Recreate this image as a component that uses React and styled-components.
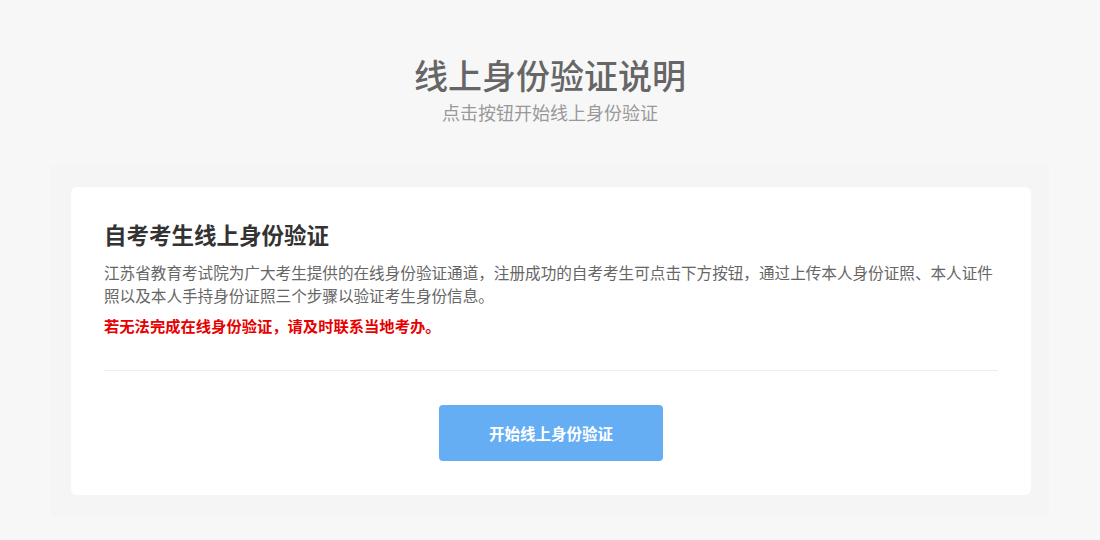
import styled, { createGlobalStyle } from 'styled-components';

const Global = createGlobalStyle`
  html, body {
    margin: 0;
    padding: 0;
    background: #f7f7f7;
    font-family: "Microsoft YaHei", "Noto Sans CJK SC", "Noto Sans", sans-serif;
  }
`;

const Page = styled.div`
  width: 1100px;
  height: 540px;
  overflow: hidden;
`;

const Header = styled.div`
  padding-top: 55px;
  text-align: center;
  h1 {
    margin: 0;
    font-size: 34px;
    line-height: 40px;
    font-weight: 500;
    color: #666;
  }
  p {
    margin: 5px 0 0;
    font-size: 18px;
    line-height: 24px;
    color: #999;
  }
`;

const Wrap = styled.div`
  width: 998px;
  margin: 41px auto 0;
  padding: 22px 18px 21px 20px;
  box-sizing: border-box;
  background: #f5f5f5;
`;

const Card = styled.div`
  background: #fff;
  border-radius: 6px;
  padding: 32px 33px 34px;
  h2 {
    margin: 0;
    font-size: 22.5px;
    line-height: 30px;
    font-weight: 700;
    color: #333;
  }
`;

const Desc = styled.p`
  margin: 12px 0 0;
  font-size: 15.6px;
  line-height: 23px;
  color: #666;
`;

const Warn = styled.p`
  margin: 7px 0 0;
  font-size: 15.3px;
  line-height: 23px;
  font-weight: 700;
  color: #e60000;
`;

const Line = styled.hr`
  margin: 33px 0 0;
  border: 0;
  border-top: 1px solid #eeeeee;
`;

const Actions = styled.div`
  display: flex;
  justify-content: center;
  padding-top: 34px;
`;

const Button = styled.button`
  width: 224px;
  height: 56px;
  border: 0;
  border-radius: 4px;
  background: #66aef4;
  color: #fff;
  font-family: inherit;
  font-size: 15.5px;
  font-weight: 700;
  cursor: pointer;
`;

export default function App() {
  return (
    <Page>
      <Global />
      <Header>
        <h1>线上身份验证说明</h1>
        <p>点击按钮开始线上身份验证</p>
      </Header>
      <Wrap>
        <Card>
          <h2>自考考生线上身份验证</h2>
          <Desc>江苏省教育考试院为广大考生提供的在线身份验证通道，注册成功的自考考生可点击下方按钮，通过上传本人身份证照、本人证件照以及本人手持身份证照三个步骤以验证考生身份信息。</Desc>
          <Warn>若无法完成在线身份验证，请及时联系当地考办。</Warn>
          <Line />
          <Actions>
            <Button>开始线上身份验证</Button>
          </Actions>
        </Card>
      </Wrap>
    </Page>
  );
}
